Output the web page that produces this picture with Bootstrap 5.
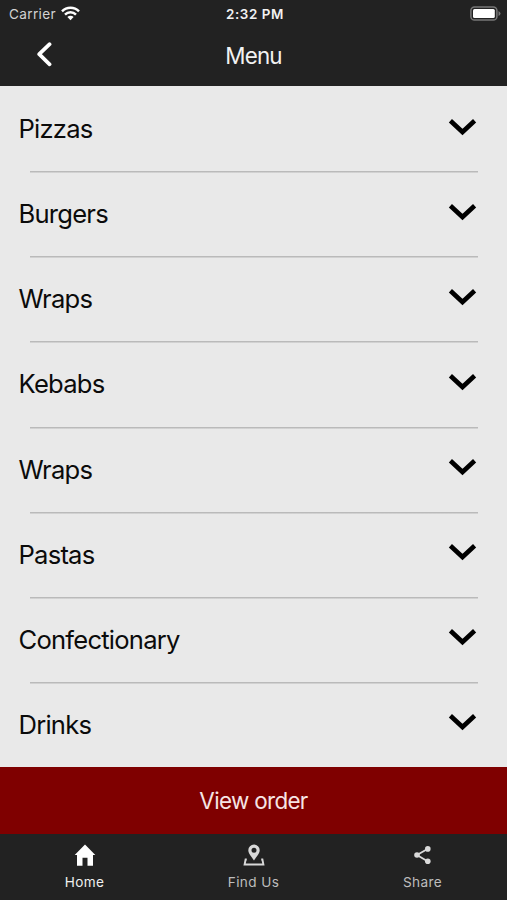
<!DOCTYPE html>
<html lang="en">
<head>
<meta charset="utf-8">
<meta name="viewport" content="width=device-width, initial-scale=1">
<title>Menu</title>
<link href="https://cdn.jsdelivr.net/npm/bootstrap@5.3.0/dist/css/bootstrap.min.css" rel="stylesheet">
<style>
body{font-family:Inter,"Liberation Sans",sans-serif;background:#e9e9e9;color:#0b0b0b;height:900px;overflow:hidden}
svg{display:block;flex:none}
.dark-bar{background:#222;color:#f2f2f2}
.status{height:28px;line-height:28px;padding:0 6px 0 9px}
.status>div{flex:1 1 0}
.carrier{color:#d2d2d2;font-size:13.6px;letter-spacing:.35px;gap:5px}
.carrier svg{margin-top:-2px}
.battery{margin-top:-2px}
.clock{font-weight:600;font-size:13.4px;letter-spacing:.6px}
.title-bar{height:58px;padding:0 36px}
.title-bar h1{font-size:22.4px;font-weight:400;line-height:56px;letter-spacing:-.8px}
.side{width:20px}
.back-icon{margin-top:14px}
.menu-list{height:681px}
.menu-item{flex:1 1 0;padding:0 30px 0 18.5px;font-size:25.6px;letter-spacing:-.78px;line-height:85px;background:none;color:inherit}
.menu-item svg{margin-top:-4px}
.menu-item+.menu-item{background:linear-gradient(#bababa,#bababa) 30px 0/448px 1.5px no-repeat}
.order{height:67px;background:#7f0000;color:#f6e4e4;font-size:22.4px;letter-spacing:-.65px;line-height:67px}
.tabs{height:66px;font-size:13.6px;letter-spacing:.4px;color:#bdbdbd}
.tabs a{color:inherit;padding-top:9px}
.tabs a.current{color:#f0f0f0}
.tabs span{line-height:18px;margin-top:6px}
</style>
</head>
<body class="d-flex flex-column">
<header class="dark-bar">
  <div class="status d-flex align-items-center">
    <div class="carrier d-flex align-items-center">Carrier
      <svg width="19" height="15" viewBox="0 0 19 15" fill="none" stroke="#fff" stroke-width="2.5"><path d="M1 5.4a12 12 0 0 1 17 0M4 8.6a7.8 7.8 0 0 1 11 0"/><path d="M9.5 14.2 6.4 11a4.4 4.4 0 0 1 6.2 0z" fill="#fff" stroke="none"/></svg>
    </div>
    <div class="clock text-center">2:32 PM</div>
    <div class="battery d-flex justify-content-end">
      <svg width="31" height="15" viewBox="0 0 31 15"><rect x=".9" y=".9" width="26" height="13.2" rx="3.6" fill="none" stroke="#777" stroke-width="1.5"/><rect x="3" y="3" width="21.8" height="9" rx="1.5" fill="#fff"/><path d="M28.5 5v5q2-1 2-2.5t-2-2.5z" fill="#777"/></svg>
    </div>
  </div>
  <nav class="title-bar d-flex align-items-start justify-content-between">
    <a href="#" class="side" aria-label="Back"><svg class="back-icon" width="17" height="25" viewBox="0 0 17 25" fill="none" stroke="#fff" stroke-width="3.7" stroke-linecap="round" stroke-linejoin="round"><path d="M13.6 2.2 3.2 12.200l10.400 10.100"/></svg></a>
    <h1 class="m-0">Menu</h1>
    <span class="side"></span>
  </nav>
</header>
<main class="menu-list d-flex flex-column">
  <button class="menu-item border-0 d-flex align-items-center justify-content-between">Pizzas<svg width="29" height="18" viewBox="0 0 29 18" fill="none" stroke="#000" stroke-width="4.6"><path d="M2.4 2.8 14.5 14 26.6 2.8"/></svg></button>
  <button class="menu-item border-0 d-flex align-items-center justify-content-between">Burgers<svg width="29" height="18" viewBox="0 0 29 18" fill="none" stroke="#000" stroke-width="4.6"><path d="M2.4 2.8 14.5 14 26.6 2.8"/></svg></button>
  <button class="menu-item border-0 d-flex align-items-center justify-content-between">Wraps<svg width="29" height="18" viewBox="0 0 29 18" fill="none" stroke="#000" stroke-width="4.6"><path d="M2.4 2.8 14.5 14 26.6 2.8"/></svg></button>
  <button class="menu-item border-0 d-flex align-items-center justify-content-between">Kebabs<svg width="29" height="18" viewBox="0 0 29 18" fill="none" stroke="#000" stroke-width="4.6"><path d="M2.4 2.8 14.5 14 26.6 2.8"/></svg></button>
  <button class="menu-item border-0 d-flex align-items-center justify-content-between">Wraps<svg width="29" height="18" viewBox="0 0 29 18" fill="none" stroke="#000" stroke-width="4.6"><path d="M2.4 2.8 14.5 14 26.6 2.8"/></svg></button>
  <button class="menu-item border-0 d-flex align-items-center justify-content-between">Pastas<svg width="29" height="18" viewBox="0 0 29 18" fill="none" stroke="#000" stroke-width="4.6"><path d="M2.4 2.8 14.5 14 26.6 2.8"/></svg></button>
  <button class="menu-item border-0 d-flex align-items-center justify-content-between">Confectionary<svg width="29" height="18" viewBox="0 0 29 18" fill="none" stroke="#000" stroke-width="4.6"><path d="M2.4 2.8 14.5 14 26.6 2.8"/></svg></button>
  <button class="menu-item border-0 d-flex align-items-center justify-content-between">Drinks<svg width="29" height="18" viewBox="0 0 29 18" fill="none" stroke="#000" stroke-width="4.6"><path d="M2.4 2.8 14.5 14 26.6 2.8"/></svg></button>
</main>
<button class="order border-0 p-0 w-100">View order</button>
<nav class="tabs dark-bar row g-0 text-center">
  <a href="#" class="current col text-decoration-none d-flex flex-column align-items-center"><svg width="22" height="24" viewBox="0 0 22 24" fill="#fff"><path d="M11 1.5 21.3 12H19v10.7h-5.5v-8h-5v8H3V12H.7z"/></svg><span>Home</span></a>
  <a href="#" class="col text-decoration-none d-flex flex-column align-items-center"><svg width="22" height="24" viewBox="0 0 22 24" fill="#d8d8d8"><path fill-rule="evenodd" d="M11 1.500a5.700 5.700 0 0 1 5.700 5.700c0 3.500-3.400 6.500-5.700 10.300C8.700 13.700 5.300 10.700 5.300 7.200A5.700 5.700 0 0 1 11 1.500zm0 3.300a2.500 2.500 0 1 0 0 5 2.500 2.500 0 0 0 0-5z"/><path d="M3.800 16.500H2.600l-1 5h18.800l-1-5h-1.200" fill="none" stroke="#d8d8d8" stroke-width="1.900"/></svg><span>Find Us</span></a>
  <a href="#" class="col text-decoration-none d-flex flex-column align-items-center"><svg width="22" height="24" viewBox="0 0 22 24" fill="#dadada"><path d="M15.500 6 5 12l10.500 6.300" fill="none" stroke="#dadada" stroke-width="1.800"/><circle cx="15.800" cy="5.900" r="2.800"/><circle cx="5" cy="12" r="2.800"/><circle cx="15.800" cy="18.200" r="2.800"/></svg><span>Share</span></a>
</nav>
<script src="https://cdn.jsdelivr.net/npm/bootstrap@5.3.0/dist/js/bootstrap.bundle.min.js"></script>
</body>
</html>
